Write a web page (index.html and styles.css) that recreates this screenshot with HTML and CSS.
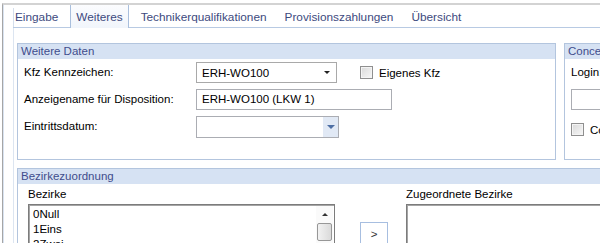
FILE: index.html
```html
<!DOCTYPE html>
<html lang="de">
  <head>
    <meta charset="UTF-8" />
    <title>Weiteres</title>
    <link rel="stylesheet" href="styles.css">
  </head>
  <body>
    <div class="window">
      <div class="frame">
        <div class="tabs">
          <div class="tab first">Eingabe</div>
          <div class="tab active">Weiteres</div>
          <div class="tab">Technikerqualifikationen</div>
          <div class="tab">Provisionszahlungen</div>
          <div class="tab">Übersicht</div>
        </div>

        <div class="panel">
          <div class="top-row">
            <div class="group daten">
              <div class="group-title">Weitere Daten</div>
              <div class="daten-body">
                <div class="label">Kfz Kennzeichen:</div>
                <div class="field-line">
                  <div class="combo">
                    <span>ERH-WO100</span>
                    <span class="arrow"></span>
                  </div>
                  <div class="check"></div>
                  <span class="check-label">Eigenes Kfz</span>
                </div>

                <div class="label">Anzeigename für Disposition:</div>
                <div class="field-line">
                  <div class="textbox wide">ERH-WO100 (LKW 1)</div>
                </div>

                <div class="label">Eintrittsdatum:</div>
                <div class="field-line">
                  <div class="datepick">
                    <span class="date-text"></span>
                    <span class="date-btn"><span class="date-arrow"></span></span>
                  </div>
                </div>
              </div>
            </div>

            <div class="group concept">
              <div class="group-title">Concept</div>
              <div class="concept-body">
                <div class="label">Login:</div>
                <div class="textbox login"></div>
                <div class="check-row">
                  <div class="check"></div>
                  <span class="check-label">Concept</span>
                </div>
              </div>
            </div>
          </div>

          <div class="group bezirke">
            <div class="group-title">Bezirkezuordnung</div>
            <div class="bezirke-body">
              <div class="col-left">
                <div class="list-label">Bezirke</div>
                <div class="listbox">
                  <div class="items">
                    <div>0Null</div>
                    <div>1Eins</div>
                    <div>2Zwei</div>
                    <div>3Drei</div>
                  </div>
                  <div class="scrollbar">
                    <div class="scroll-up"><span class="up-arrow"></span></div>
                    <div class="thumb"></div>
                  </div>
                </div>
              </div>
              <div class="col-mid">
                <div class="move-btn">&gt;</div>
              </div>
              <div class="col-right">
                <div class="list-label">Zugeordnete Bezirke</div>
                <div class="listbox empty"></div>
              </div>
            </div>
          </div>
        </div>
      </div>
    </div>
  </body>
</html>
```

FILE: styles.css
```css
body {
  margin: 0;
  background-color: #ffffff;
  color: #000000;
  font-family: "Liberation Sans", Arial, sans-serif;
  font-size: 11.5px;
  overflow: hidden;
}

.window {
  margin: 3px 0 0 2px;
  border-top: 2px solid #d3d3d3;
  border-left: 1px solid #a6a6a6;
  height: 240px;
  overflow: hidden;
}

.frame {
  border-left: 1px solid #d9e3f1;
  padding-left: 9px;
  height: 100%;
}

/* tab strip */
.tabs {
  display: flex;
  align-items: flex-end;
  border-bottom: 1px solid #b8cae3;
  height: 22px;
  white-space: nowrap;
  font-size: 11.8px;
}

.tab {
  padding: 0 9px;
  height: 19px;
  line-height: 19px;
  color: #3d4a7e;
}

.tab.first {
  padding-left: 1px;
  border-left: 1px solid #d4deec;
}

.tab.active {
  margin: 0 3px -1px 3px;
  padding: 3px 5px 0 5px;
  height: 20px;
  border: 1px solid #a9bfdd;
  border-bottom: none;
  background: linear-gradient(#fbfcfe, #f1f5fb);
}

/* panel */
.panel {
  border-left: 1px solid #dce5f1;
  padding: 15px 0 0 3px;
  height: 100%;
}

.top-row {
  display: flex;
  gap: 8px;
  margin-bottom: 8px;
}

.group {
  border: 1px solid #b3c5de;
  background-color: #ffffff;
}

.group-title {
  background-color: #d6e2f3;
  color: #3f4d8c;
  height: 15px;
  line-height: 15px;
  padding-left: 3px;
  white-space: nowrap;
}

.daten {
  width: 537px;
  height: 115px;
  flex: none;
}

.concept {
  width: 120px;
  height: 115px;
  flex: none;
}

.daten-body {
  display: grid;
  grid-template-columns: 172px auto;
  row-gap: 6px;
  padding: 3px 0 0 6px;
}

.label {
  line-height: 21px;
  white-space: nowrap;
}

.field-line {
  display: flex;
  align-items: center;
  height: 21px;
}

.combo {
  width: 129px;
  height: 19px;
  border: 1px solid #a9a9a9;
  padding: 0 5px;
  display: flex;
  align-items: center;
  justify-content: space-between;
}

.arrow {
  border-left: 3px solid transparent;
  border-right: 3px solid transparent;
  border-top: 3px solid #222222;
  margin-right: 1px;
}

.check {
  width: 11px;
  height: 11px;
  border: 1px solid #8f8f8f;
  background: linear-gradient(135deg, #d9d9d9, #f7f7f7);
  box-shadow: inset 0 0 0 1px #f4f4f4;
  flex: none;
}

.field-line .check {
  margin-left: 23px;
}

.check-label {
  margin-left: 6px;
  white-space: nowrap;
}

.textbox {
  height: 19px;
  line-height: 19px;
  border: 1px solid #abadb3;
  padding-left: 5px;
  white-space: nowrap;
}

.textbox.wide {
  width: 189px;
}

.datepick {
  width: 141px;
  height: 20px;
  border: 1px solid #abadb3;
  display: flex;
  margin-top: 1px;
}

.date-text {
  flex: 1;
}

.date-btn {
  width: 15px;
  background-color: #e1e9f5;
  display: flex;
  align-items: center;
  justify-content: center;
}

.date-arrow {
  border-left: 4px solid transparent;
  border-right: 4px solid transparent;
  border-top: 4px solid #4e6fa4;
}

.concept-body {
  padding: 3px 0 0 6px;
}

.textbox.login {
  width: 120px;
  margin-top: 6px;
  background-color: #ffffff;
}

.check-row {
  display: flex;
  align-items: center;
  margin-top: 13px;
}

/* Bezirke */
.bezirke {
  width: 660px;
  height: 100px;
}

.bezirke-body {
  display: flex;
  padding: 3px 0 0 10px;
}

.list-label {
  line-height: 15px;
  margin-bottom: 2px;
  white-space: nowrap;
}

.col-left {
  width: 307px;
  flex: none;
}

.listbox {
  height: 60px;
  border: 1px solid #7c7c7c;
  box-shadow: inset 1px 1px 0 #a5a5a5;
  display: flex;
}

.items {
  flex: 1;
  padding: 2px 0 0 4px;
  line-height: 15px;
}

.scrollbar {
  width: 17px;
  margin: 1px 1px 0 0;
  background-color: #fafafa;
}

.scroll-up {
  height: 16px;
  display: flex;
  align-items: center;
  justify-content: center;
}

.up-arrow {
  border-left: 3px solid transparent;
  border-right: 3px solid transparent;
  border-bottom: 3px solid #333333;
}

.thumb {
  margin: 1px 1px 0 1px;
  height: 16px;
  border: 1px solid #979797;
  border-radius: 2px;
  background: linear-gradient(90deg, #f2f2f2, #dadada);
}

.col-mid {
  width: 28px;
  flex: none;
  margin-left: 25px;
  padding-top: 35px;
}

.move-btn {
  height: 22px;
  line-height: 22px;
  border: 1px solid #a7bee0;
  background-color: #ffffff;
  text-align: center;
  color: #333333;
}

.col-right {
  flex: none;
  margin-left: 18px;
}

.listbox.empty {
  width: 260px;
}
```
